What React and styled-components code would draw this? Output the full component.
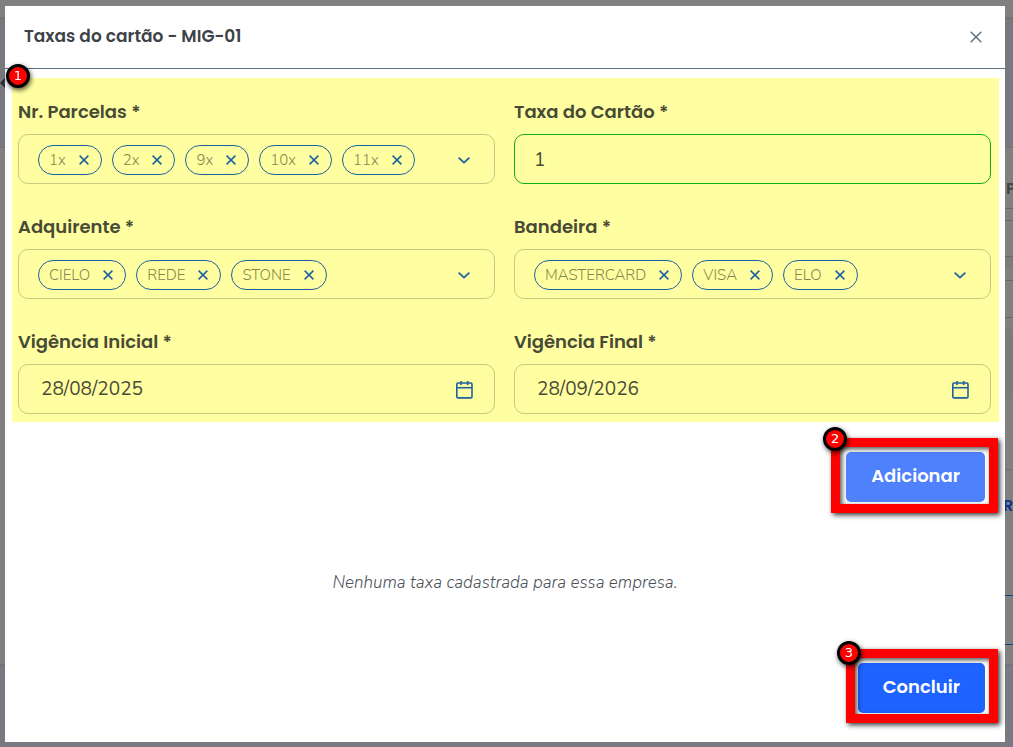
import React, { useId, useState } from 'react';
import styled, { createGlobalStyle, ThemeProvider } from 'styled-components';

const theme = {
  colors: {
    ink: '#3d4248',
    muted: '#4c525a',
    slate: '#5f6f7c',
    highlight: '#fffea0',
    label: '#474a35',
    value: '#4a4a38',
    chipText: '#85864f',
    line: '#c9c982',
    blue: '#1c62a0',
    green: '#10b010',
    primary: '#1e62ff',
    red: '#ff0000',
  },
  fonts: {
    heading: 'Poppins, "Open Sans", sans-serif',
    body: 'Nunito, "Open Sans", sans-serif',
    badge: '"DejaVu Sans", sans-serif',
  },
};

const GlobalStyle = createGlobalStyle`
  *, *::before, *::after {
    box-sizing: border-box;
  }
  html, body, #root {
    height: 100%;
    margin: 0;
  }
  body {
    overflow: hidden;
    background: #797a7f;
  }
  button, input {
    font: inherit;
    color: inherit;
  }
  button {
    padding: 0;
    border: 0;
    background: none;
    cursor: pointer;
  }
`;

/* page behind the modal, already dimmed */
const Page = styled.div`
  height: 100%;
  display: flex;
  flex-direction: column;
  font-family: ${p => p.theme.fonts.heading};
`;
const TopBar = styled.div`
  height: 19px;
  flex: none;
  background: #808080;
  border-bottom: 2px solid #727376;
`;
const Hero = styled.div`
  display: flex;
  align-items: center;
  height: 129px;
  flex: none;
  background: #77797e;
  border-bottom: 1px solid #6e7074;
  color: #2c2d30;
`;
const Card = styled.div`
  height: 518px;
  flex: none;
  display: flex;
  flex-direction: column;
  padding-left: 40px;
  background: #808080;
  border-bottom: 2px solid #737477;
`;
const Strip = styled.div`
  height: ${p => p.$height}px;
  flex: none;
  display: flex;
  align-items: center;
  justify-content: flex-end;
  background: ${p => p.$fill || '#808080'};
  border-bottom: ${p => (p.$line ? `1px solid ${p.$line}` : '0')};
`;
const Cut = styled.span`
  width: ${p => p.$width}px;
  overflow: hidden;
  flex: none;
  font-size: 16px;
  font-weight: 600;
  color: ${p => p.$color};
`;

const Overlay = styled.div`
  position: fixed;
  inset: 0;
  display: flex;
  padding: 6px 8px 5px 5px;
`;
const Modal = styled.section`
  flex: 1;
  min-width: 0;
  display: flex;
  flex-direction: column;
  background: #fff;
`;
const Header = styled.header`
  display: flex;
  align-items: center;
  justify-content: space-between;
  height: 63px;
  padding: 0 23px 0 19px;
  border-bottom: 1px solid ${p => p.theme.colors.slate};
`;
const Title = styled.h1`
  margin: 0;
  padding-bottom: 2px;
  font: 600 17px/24px ${p => p.theme.fonts.heading};
  color: ${p => p.theme.colors.ink};
`;
const CloseButton = styled.button`
  display: flex;
  color: ${p => p.theme.colors.slate};
`;

const Highlight = styled.div`
  position: relative;
  display: grid;
  grid-template-columns: 1fr 1fr;
  gap: 31px 19px;
  margin: 9px 6px 0 7px;
  padding: 22px 8px 8px 6px;
  background: ${p => p.theme.colors.highlight};
`;
const Field = styled.div`
  min-width: 0;
  display: flex;
  flex-direction: column;
  gap: 10px;
`;
const Label = styled.label`
  font: 600 18px/24px ${p => p.theme.fonts.heading};
  color: ${p => p.theme.colors.label};
`;
const Box = styled.div`
  display: flex;
  align-items: center;
  gap: 10px;
  height: 50px;
  padding: ${p => (p.$date ? '0 21px 0 22px' : '2px 22px 0 19px')};
  border: 1px solid ${p => (p.$valid ? p.theme.colors.green : p.theme.colors.line)};
  border-radius: 10px;
`;
const Chip = styled.span`
  display: flex;
  align-items: center;
  gap: 13px;
  height: 30px;
  padding: 0 12px 0 10px;
  border: 1px solid ${p => p.theme.colors.blue};
  border-radius: 15px;
  font: 300 15px/20px ${p => p.theme.fonts.body};
  color: ${p => p.theme.colors.chipText};
`;
const IconButton = styled.button`
  display: flex;
  flex: none;
  margin-left: ${p => (p.$end ? 'auto' : '0')};
  color: ${p => p.theme.colors.blue};
`;
const Input = styled.input`
  flex: 1;
  min-width: 0;
  padding: 0;
  border: 0;
  outline: 0;
  background: none;
  font: 400 19px/28px ${p => p.theme.fonts.body};
  color: ${p => p.theme.colors.value};
`;

const Actions = styled.div`
  display: flex;
  justify-content: flex-end;
  padding: 30px 20px 0;
`;
const Marked = styled.div`
  position: relative;
`;
const Button = styled.button`
  height: 50px;
  padding: 0 25px 2px;
  border-radius: 5px;
  background: ${p => p.theme.colors.primary};
  font: 600 18px/24px ${p => p.theme.fonts.heading};
  color: #fff;

  &:disabled {
    background: #5081fc;
    cursor: default;
  }
`;
const Frame = styled.span`
  position: absolute;
  inset: -14px -13px ${p => (p.$tight ? '-10px -12px' : '-11px -15px')};
  border: 9px solid ${p => p.theme.colors.red};
  box-shadow: 2px 2px 5px rgba(0, 0, 0, 0.8), inset 2px 2px 5px rgba(0, 0, 0, 0.7);
  pointer-events: none;
`;
const Badge = styled.span`
  position: absolute;
  top: ${p => p.$top}px;
  left: ${p => p.$left}px;
  width: 24px;
  height: 24px;
  border: 3px solid #000;
  border-radius: 50%;
  background: ${p => p.theme.colors.red};
  box-shadow: 1px 2px 5px rgba(0, 0, 0, 0.7);
  font: 400 13px/18px ${p => p.theme.fonts.badge};
  text-align: center;
  color: #fff;
`;
const Empty = styled.p`
  margin: 69px 0 38px;
  font: italic 300 17px/24px ${p => p.theme.fonts.body};
  text-align: center;
  color: ${p => p.theme.colors.muted};
`;

const Cross = ({ size = 10, weight = 1.5 }) => (
  <svg width={size} height={size} viewBox="0 0 10 10" fill="none" stroke="currentColor" strokeWidth={weight}>
    <path d="M.6.6l8.8 8.8M9.4.6l-8.8 8.8" />
  </svg>
);

const Chevron = () => (
  <svg width="16" height="16" viewBox="0 0 16 16" fill="none" stroke="currentColor" strokeWidth="1.8">
    <path d="M2.6 5.6l5.4 5 5.4-5" />
  </svg>
);

const Calendar = () => (
  <svg width="18" height="20" viewBox="0 0 18 20" fill="none" stroke="currentColor" strokeWidth="1.6">
    <rect x="1.8" y="4" width="15.2" height="14.9" rx="1.2" />
    <path d="M1.8 8.7H17M6 2v4M12.7 2v4" />
  </svg>
);

const ChipsField = ({ label, options }) => {
  const id = useId();
  const [items, setItems] = useState(options);
  return (
    <Field>
      <Label htmlFor={id}>{label}</Label>
      <Box>
        {items.map(item => (
          <Chip key={item}>
            {item}
            <IconButton
              type="button"
              aria-label={`Remover ${item}`}
              onClick={() => setItems(items.filter(i => i !== item))}>
              <Cross />
            </IconButton>
          </Chip>
        ))}
        <IconButton id={id} type="button" aria-haspopup="listbox" $end>
          <Chevron />
        </IconButton>
      </Box>
    </Field>
  );
};

const TextField = ({ label, value, valid, date }) => {
  const id = useId();
  return (
    <Field>
      <Label htmlFor={id}>{label}</Label>
      <Box $valid={valid} $date={date}>
        <Input id={id} type="text" defaultValue={value} />
        {date && (
          <IconButton type="button" aria-label="Abrir calendário">
            <Calendar />
          </IconButton>
        )}
      </Box>
    </Field>
  );
};

const Backdrop = () => (
  <Page aria-hidden="true">
    <TopBar />
    <Hero>
      <svg width="12" height="16" viewBox="0 0 12 16" fill="none" stroke="currentColor" strokeWidth="3">
        <path d="M8 2L2 8l6 6" />
      </svg>
    </Hero>
    <Card>
      <Strip $height={20} />
      <Strip $height={41} $line="#676767">
        <Cut $width={7} $color="#414246">P</Cut>
      </Strip>
      <Strip $height={12} $line="#676767" />
      <Strip $height={36} $line="#676767" />
      <Strip $height={12} $fill="#7a7c7c" />
      <Strip $height={12} $line="#676767" />
      <Strip $height={37} $line="#676767" />
      <Strip $height={11} />
      <Strip $height={70} $fill="#7a7c7c" />
      <Strip $height={71} $line="#707070" />
      <Strip $height={70}>
        <Cut $width={10} $color="#10318a">R</Cut>
      </Strip>
      <Strip $height={56} $line="#0f4577" />
      <Strip $height={49} $line="#0f4577" />
    </Card>
  </Page>
);

const App = () => (
  <ThemeProvider theme={theme}>
    <GlobalStyle />
    <Backdrop />
    <Overlay>
      <Modal role="dialog" aria-labelledby="modal-title">
        <Header>
          <Title id="modal-title">Taxas do cartão - MIG-01</Title>
          <CloseButton type="button" aria-label="Fechar">
            <Cross size={12} weight={1.2} />
          </CloseButton>
        </Header>
        <Highlight>
          <ChipsField label="Nr. Parcelas *" options={['1x', '2x', '9x', '10x', '11x']} />
          <TextField label="Taxa do Cartão *" value="1" valid />
          <ChipsField label="Adquirente *" options={['CIELO', 'REDE', 'STONE']} />
          <ChipsField label="Bandeira *" options={['MASTERCARD', 'VISA', 'ELO']} />
          <TextField label="Vigência Inicial *" value="28/08/2025" date />
          <TextField label="Vigência Final *" value="28/09/2026" date />
          <Badge $top={-14} $left={-6}>1</Badge>
        </Highlight>
        <Actions>
          <Marked>
            <Button type="button" disabled>Adicionar</Button>
            <Frame />
            <Badge $top={-25} $left={-23}>2</Badge>
          </Marked>
        </Actions>
        <Empty>Nenhuma taxa cadastrada para essa empresa.</Empty>
        <Actions>
          <Marked>
            <Button type="button">Concluir</Button>
            <Frame $tight />
            <Badge $top={-22} $left={-21}>3</Badge>
          </Marked>
        </Actions>
      </Modal>
    </Overlay>
  </ThemeProvider>
);

export default App;
